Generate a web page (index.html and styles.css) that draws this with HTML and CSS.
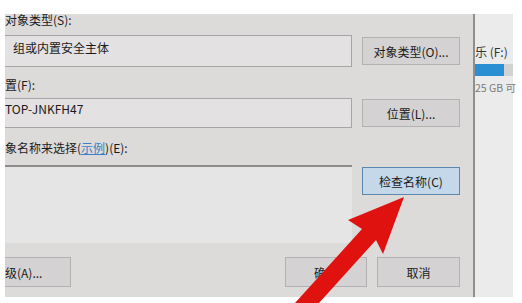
FILE: index.html
```html
<!DOCTYPE html>
<html lang="zh-CN">
<head>
    <meta charset="UTF-8">
    <meta name="viewport" content="width=device-width, initial-scale=1.0">
    <title>选择用户或组</title>
    <link rel="stylesheet" href="styles.css">
</head>
<body>
    <div class="screen">
        <div class="dialog">
            <div class="label">对象类型(S):</div>
            <div class="row row-type">
                <div class="field field-type">组或内置安全主体</div>
                <button class="btn">对象类型(O)...</button>
            </div>

            <div class="label label-loc">置(F):</div>
            <div class="row row-loc">
                <div class="field field-loc">TOP-JNKFH47</div>
                <button class="btn">位置(L)...</button>
            </div>

            <div class="label label-names">象名称来选择(<span class="link">示例</span>)(E):</div>
            <div class="row row-names">
                <div class="names"></div>
                <button class="btn btn-check">检查名称(C)</button>
            </div>

            <div class="footer">
                <button class="btn btn-adv">级(A)...</button>
                <button class="btn btn-ok">确定</button>
                <button class="btn btn-cancel">取消</button>
            </div>
        </div>
        <div class="side">
            <div class="drive">乐 (F:)</div>
            <div class="bar"><div class="bar-used"></div></div>
            <div class="free">25 GB 可</div>
        </div>
    </div>

    <!-- 红色箭头指向“检查名称” -->
    <svg class="arrow" width="522" height="303" viewBox="0 0 522 303">
        <polygon points="404,197 348,220 362,229 295,303 319,303 376,240 383,254" fill="#e0120f"/>
    </svg>
</body>
</html>
```

FILE: styles.css
```css
body {
    margin: 0;
    background-color: #fff;
    font-family: "Noto Sans CJK SC", "Noto Sans", sans-serif;
    font-size: 12px;
    color: #1a1a1a;
    width: 522px;
    height: 303px;
    overflow: hidden;
    position: relative;
}
.screen {
    display: flex;
    padding-top: 14px;
    padding-left: 5px;
}
.dialog {
    width: 455px;
    height: 283px;
    padding-right: 13px;
    background-color: #dddada;
    display: flex;
    flex-direction: column;
}
.label {
    line-height: 12px;
    height: 12px;
    white-space: nowrap;
}
.link {
    color: #3a7fc6;
    text-decoration: underline;
}
.row {
    display: flex;
    gap: 10px;
    align-items: center;
}
.row-type {
    margin-top: 9px;
}
.label-loc {
    margin-top: 12px;
}
.row-loc {
    margin-top: 7px;
}
.label-names {
    margin-top: 14px;
}
.row-names {
    margin-top: 11px;
    align-items: flex-start;
}
.field {
    box-sizing: border-box;
    width: 347px;
    border: 1px solid #a7a5a5;
    border-left: none;
    background-color: #e3e1e1;
    line-height: 12px;
    white-space: nowrap;
}
.field-type {
    height: 32px;
    padding: 6px 0 0 8px;
}
.field-loc {
    height: 30px;
    padding: 4px 0 0 0;
}
.names {
    box-sizing: border-box;
    width: 347px;
    height: 78px;
    border-top: 2px solid #8e8c8c;
    background-color: #e6e5e5;
}
.btn {
    width: 98px;
    height: 28px;
    padding: 0;
    border: 1px solid #b3b1b1;
    background-color: #d4d2d2;
    font-family: inherit;
    font-size: 12px;
    color: #1a1a1a;
    white-space: nowrap;
}
.btn-check {
    margin-top: 2px;
    border-color: #5d88ad;
    background-color: #c4d8e9;
}
.footer {
    display: flex;
    margin-top: 14px;
}
.footer .btn {
    height: 30px;
}
.btn-adv {
    width: 66px;
    border-left: none;
    text-align: left;
}
.btn-ok {
    width: 82px;
    margin-left: auto;
}
.btn-cancel {
    width: 83px;
    margin-left: 10px;
}
.side {
    width: 38px;
    height: 283px;
    border-left: 2px solid #8f8f8f;
    background-color: #ebebeb;
    color: #333;
    white-space: nowrap;
    font-size: 10.5px;
}
.drive {
    margin-top: 30px;
    line-height: 15px;
    font-size: 12px;
}
.bar {
    margin-top: 5px;
    height: 12px;
    background-color: #d2d2d2;
}
.bar-used {
    width: 29px;
    height: 12px;
    background-color: #2a8fd3;
}
.free {
    margin-top: 5px;
    line-height: 14px;
    color: #7a7a7a;
}
.arrow {
    position: absolute;
    top: 0;
    left: 0;
    pointer-events: none;
}
```
